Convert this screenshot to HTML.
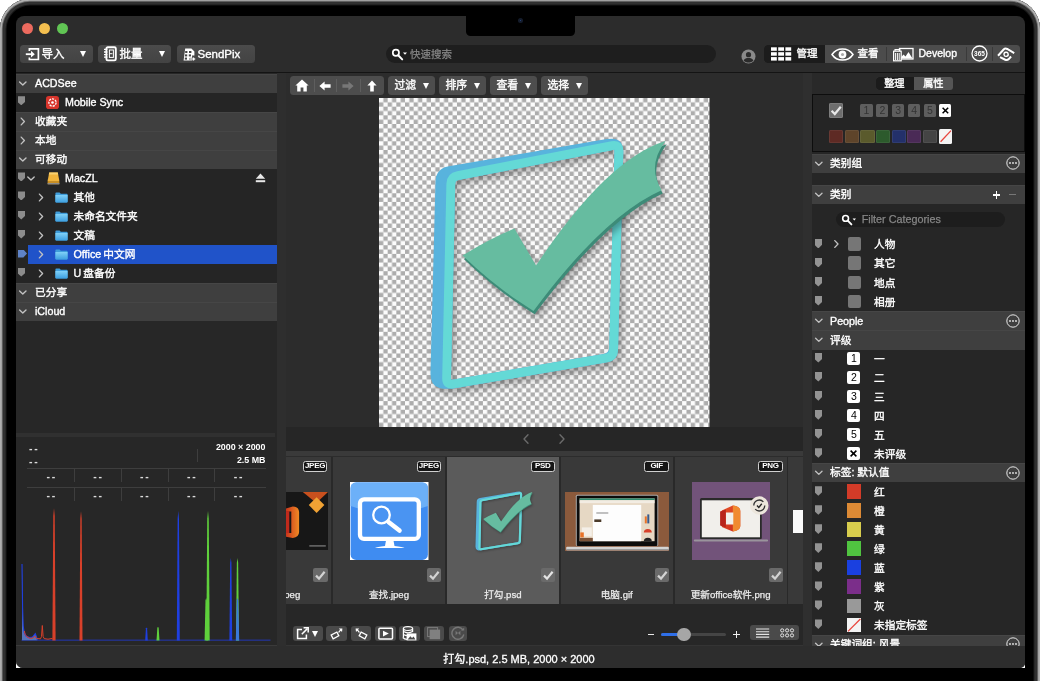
<!DOCTYPE html>
<html lang="zh"><head><meta charset="utf-8"><title>ACDSee</title>
<style>
*{box-sizing:border-box;margin:0;padding:0}
html,body{width:1040px;height:681px;overflow:hidden;background:#fff}
body{position:relative;font-family:"Liberation Sans","Noto Sans CJK SC",sans-serif;color:#fff;font-size:11px;line-height:1}
div,span,svg{position:absolute}
#bezel{left:-.2px;top:-1px;width:1040.600px;height:760px;border-radius:30px;background:#000;
 box-shadow:inset 0 0 0 1.800px #b0b0b0, inset 0 0 0 2.700px #707070, inset 0 0 0 5.600px #303030, inset 0 0 0 6.600px #181818}
#blcorner{left:16px;top:655px;width:12px;height:13px;background:#fff}
#brcorner{left:1017px;top:660px;width:8px;height:8.400px;background:#fff}
#screen{left:16px;top:16px;width:1009px;height:652px;background:#2c2c2c;border-radius:8px 8px 5px 7px;overflow:hidden}
#w{left:-16px;top:-16px;width:1040px;height:681px;will-change:transform}
#notch{left:465.800px;top:16px;width:109.400px;height:19.500px;background:#000;border-radius:0 0 4.500px 4.500px}
.tl{top:22.5px;width:11px;height:11px;border-radius:50%}
.btn{height:18px;background:linear-gradient(#4b4b4b,#434343);border-radius:3.5px}
.bt{font-size:11.5px;line-height:18px;top:0;white-space:nowrap;-webkit-text-stroke:.35px #fff}
.dd{width:0;height:0;border-left:3.900px solid transparent;border-right:3.900px solid transparent;border-top:6px solid #fff;top:6.300px;margin-left:-.4px}
.row{height:19px;white-space:nowrap}
.hdr{background:#3f3f3f;box-shadow:inset 0 1px 0 #464646}
.sub{background:#252525}
.t{top:0;font-size:10.700px;line-height:19px;white-space:nowrap;-webkit-text-stroke:.35px #fff}
.tag{width:7.5px;height:9px;background:#8c8c8c;clip-path:polygon(0 0,100% 0,100% 62%,50% 100%,0 62%)}
.cb{width:14px;height:14px;border-radius:2px;background:#6c6c6c}
</style></head>
<body>
<div id="bezel"></div><div id="blcorner"></div><div id="brcorner"></div>
<div id="screen"><div id="w">
<div id="notch"><div style="left:52.200px;top:1.800px;width:5px;height:5px;border-radius:50%;background:#141c2c"></div><div style="left:54px;top:3.600px;width:1.400px;height:1.400px;border-radius:50%;background:#2a4a8a"></div></div>
<div class="tl" style="left:22.0px;background:#ec6a5e"></div>
<div class="tl" style="left:39.0px;background:#f4bf4f"></div>
<div class="tl" style="left:56.5px;background:#61c554"></div>
<div style="left:16px;top:71.5px;width:1009px;height:1.5px;background:#141414"></div>
<div class="btn" style="left:19.5px;top:45.200px;width:73px"><svg style="left:5.5px;top:2px" width="15" height="14" viewBox="0 0 15 14"><path d="M4.400,4V1.900h9v10.600h-9v-2.100" fill="none" stroke="#fff" stroke-width="1.700"/><path d="M0.800,7.200h6.800" stroke="#fff" stroke-width="1.800"/><path d="M6,3.800L9.800,7.200L6,10.600z" fill="#fff"/></svg><span class="bt" style="left:22px">导入</span><span class="dd" style="left:61px"></span></div>
<div class="btn" style="left:97.5px;top:45.200px;width:73px"><svg style="left:6.5px;top:1px" width="13" height="16" viewBox="0 0 13 16"><rect x="2.400" y="1.200" width="9.400" height="13.200" rx="1.400" fill="none" stroke="#fff" stroke-width="1.900"/><path d="M0,3.400h3.400M0,6h3.400M0,8.600h3.400M0,11.200h3.400" stroke="#fff" stroke-width="1.300"/><rect x="5.4" y="4" width="4" height="7.4" fill="none" stroke="#fff" stroke-width="1"/><path d="M5.4,7.7h3" stroke="#fff" stroke-width="1"/></svg><span class="bt" style="left:22px">批量</span><span class="dd" style="left:61.5px"></span></div>
<div class="btn" style="left:177px;top:45.200px;width:78px"><svg style="left:6px;top:3px" width="13" height="13" viewBox="0 0 13 13"><path d="M2.2,0.4h6.2l3,3v4.2h-2.4v5H0.6z" fill="#fff"/><rect x="2.2" y="3" width="2.2" height="2" fill="#444"/><rect x="2" y="6.4" width="2.2" height="2" fill="#444"/><rect x="1.8" y="9.6" width="2.2" height="2" fill="#444"/><rect x="6" y="3" width="2.4" height="2" fill="#444"/><rect x="5.8" y="6.4" width="2.2" height="2" fill="#444"/><path d="M6.6,10.2h3v-1.8l3.2,2.6l-3.2,2.6v-1.8h-3z" fill="#fff" stroke="#444" stroke-width=".5"/></svg><span class="bt" style="left:20.5px;font-size:11.5px">SendPix</span></div>
<div style="left:385.5px;top:45px;width:330px;height:18px;border-radius:9px;background:#1e1e1e"><svg style="left:3px;top:2px" width="22" height="15" viewBox="0 0 22 15"><circle cx="6.9" cy="5.8" r="3.1" fill="none" stroke="#fff" stroke-width="1.7"/><path d="M9.2,8.2L13.2,12.4" stroke="#fff" stroke-width="2" stroke-linecap="round"/><path d="M14,5.4h4l-2,2.4z" fill="#fff"/></svg><span style="left:24.5px;top:0;line-height:18.5px;font-size:10.5px;color:#858585;-webkit-text-stroke:.25px #858585;white-space:nowrap">快速搜索</span></div>
<svg style="left:741px;top:48.5px" width="15" height="15" viewBox="0 0 15 15"><circle cx="7.5" cy="7.5" r="7" fill="#8a8a8a"/><circle cx="7.5" cy="5.7" r="2.6" fill="#2b2b2b"/><path d="M2.6,11.4c1-2,2.8-2.4,4.9-2.4s3.900,.4,4.900,2.4c-1.200,1.400-3,2.200-4.900,2.200s-3.700-.8-4.900-2.200z" fill="#2b2b2b"/></svg>
<div style="left:763.5px;top:44.5px;width:256px;height:18px;border-radius:3.5px;background:#4c4c4c;overflow:hidden"><div style="left:0;top:0;width:61.500px;height:18px;background:#1c1c1c"></div><div style="left:122px;top:2px;width:1px;height:14px;background:#3a3a3a"></div><div style="left:202px;top:2px;width:1px;height:14px;background:#3a3a3a"></div><div style="left:228.500px;top:2px;width:1px;height:14px;background:#3a3a3a"></div><svg style="left:7.5px;top:2.5px" width="21" height="14" viewBox="0 0 21 14"><rect x="0.0" y="0.3" width="5.800" height="3.500" fill="#fff"/><rect x="7.2" y="0.3" width="5.800" height="3.500" fill="#fff"/><rect x="14.4" y="0.3" width="5.800" height="3.500" fill="#fff"/><rect x="0.0" y="5.2" width="5.800" height="3.500" fill="#fff"/><rect x="7.2" y="5.2" width="5.800" height="3.500" fill="#fff"/><rect x="14.4" y="5.2" width="5.800" height="3.500" fill="#fff"/><rect x="0.0" y="10.100000000000001" width="5.800" height="3.500" fill="#fff"/><rect x="7.2" y="10.100000000000001" width="5.800" height="3.500" fill="#fff"/><rect x="14.4" y="10.100000000000001" width="5.800" height="3.500" fill="#fff"/></svg><span class="bt" style="left:33px;top:-.7px;font-size:10.5px">管理</span><svg style="left:67.500px;top:3px" width="23" height="13" viewBox="0 0 23 13"><path d="M1,6.500C4,2 8,0.900 11.500,0.900S19,2 22,6.500C19,11 15,12.100 11.500,12.100S4,11 1,6.500z" fill="none" stroke="#fff" stroke-width="1.500"/><circle cx="11.500" cy="6.500" r="3.900" fill="#fff"/><circle cx="11.500" cy="6.500" r="1.500" fill="#aaa"/></svg><span class="bt" style="left:94px;top:-.7px;font-size:10.5px">查看</span><svg style="left:129px;top:2px" width="21" height="15" viewBox="0 0 21 15"><rect x="6.500" y="1.500" width="13.500" height="10.500" fill="none" stroke="#fff" stroke-width="1.300"/><path d="M7,11.500l3.500-4l2,2l3-4.500l4,6.500z" fill="#fff"/><rect x="0.600" y="4.200" width="7.600" height="9.600" fill="#4c4c4c" stroke="#fff" stroke-width="1.200"/><path d="M2.600,6v7M4.400,6v7M6.200,6v7" stroke="#fff" stroke-width="1"/><path d="M2,4V2.600h4.800V4" fill="none" stroke="#fff" stroke-width="1.100"/></svg><span class="bt" style="left:155px;top:-.5px;font-size:10.5px">Develop</span><svg style="left:207.700px;top:.4px" width="17" height="17" viewBox="0 0 17 17"><circle cx="8.500" cy="8.500" r="7.500" fill="none" stroke="#fff" stroke-width="1.300"/><text x="8.500" y="11" font-size="6.500" font-weight="bold" fill="#fff" text-anchor="middle" font-family="Liberation Sans, sans-serif">365</text></svg><svg style="left:232.500px;top:0.800px" width="20" height="17" viewBox="0 0 20 17"><g transform="rotate(-8 10 8.500)"><path d="M1.800,9.600L8.200,4.200Q10,2.900 11.800,4.200L18.200,9.300" fill="none" stroke="#fff" stroke-width="2"/><path d="M3.600,11.200L8.400,14.600Q10.200,15.700 12,14.400L14.600,12.200" fill="none" stroke="#fff" stroke-width="2"/><circle cx="10" cy="9.300" r="2.100" fill="none" stroke="#fff" stroke-width="1.400"/></g></svg></div>
<div style="left:16px;top:73px;width:261px;height:572px;background:#272727"></div>
<div class="row hdr" style="left:16px;top:73.80px;width:261px"><svg style="left:0;top:0px" width="261" height="19" viewBox="16 0 261 19"><path d="M19.6,7.9 L22.8,11.1 L26.0,7.9" fill="none" stroke="#c2c2c2" stroke-width="1.35" stroke-linecap="round" stroke-linejoin="round"/></svg><span class="t" style="left:19px">ACDSee</span></div>
<div class="row sub" style="left:16px;top:92.83px;width:261px">
<div class="tag" style="left:1.500px;top:3.500px"></div>
<svg style="left:29.500px;top:3px" width="13" height="13" viewBox="0 0 13 13"><rect x="0" y="0" width="13" height="13" rx="2.800" fill="#d8352c"/><circle cx="6.500" cy="6.500" r="3.600" fill="none" stroke="#fff" stroke-width="1.300" stroke-dasharray="2.200 1"/><circle cx="6.500" cy="6.500" r="1.300" fill="#fff"/></svg>
<span class="t" style="left:49px">Mobile Sync</span>
</div>
<div class="row hdr" style="left:16px;top:111.86px;width:261px"><svg style="left:0;top:0px" width="261" height="19" viewBox="16 0 261 19"><path d="M21.2,6.1 L24.400000000000002,9.5 L21.2,12.9" fill="none" stroke="#c2c2c2" stroke-width="1.35" stroke-linecap="round" stroke-linejoin="round"/></svg><span class="t" style="left:19px">收藏夹</span></div>
<div class="row hdr" style="left:16px;top:130.89px;width:261px"><svg style="left:0;top:0px" width="261" height="19" viewBox="16 0 261 19"><path d="M21.2,6.1 L24.400000000000002,9.5 L21.2,12.9" fill="none" stroke="#c2c2c2" stroke-width="1.35" stroke-linecap="round" stroke-linejoin="round"/></svg><span class="t" style="left:19px">本地</span></div>
<div class="row hdr" style="left:16px;top:149.92px;width:261px"><svg style="left:0;top:0px" width="261" height="19" viewBox="16 0 261 19"><path d="M19.6,7.9 L22.8,11.1 L26.0,7.9" fill="none" stroke="#c2c2c2" stroke-width="1.35" stroke-linecap="round" stroke-linejoin="round"/></svg><span class="t" style="left:19px">可移动</span></div>
<div class="row sub" style="left:16px;top:168.95px;width:261px">
<div class="tag" style="left:1.500px;top:3.500px"></div>
<svg style="left:0;top:0px" width="261" height="19" viewBox="16 0 261 19"><path d="M27.8,7.9 L31,11.1 L34.2,7.9" fill="none" stroke="#c2c2c2" stroke-width="1.35" stroke-linecap="round" stroke-linejoin="round"/></svg>
<svg style="left:30.500px;top:3px" width="13" height="13" viewBox="0 0 13 13"><path d="M2.200,0.600H10.800L12.400,9H0.600z" fill="#f0b43c"/><path d="M2.200,0.600H10.800L11.200,2.600H1.800z" fill="#f7d070"/><rect x="0.600" y="9" width="11.800" height="3.200" rx="0.600" fill="#c98f24"/><rect x="0.600" y="11" width="11.800" height="1.400" fill="#8a8a8a"/></svg>
<span class="t" style="left:49px">MacZL</span>
<svg style="left:239px;top:4.500px" width="11" height="10" viewBox="0 0 11 10"><path d="M5.500,0.500L10.200,5.800H0.800z" fill="#e8e8e8"/><rect x="0.800" y="7.200" width="9.400" height="2" fill="#e8e8e8"/></svg>
</div>
<div class="row sub" style="left:16px;top:187.98px;width:261px">
<div class="tag" style="left:1.500px;top:3.500px"></div>
<svg style="left:0;top:0px" width="261" height="19" viewBox="16 0 261 19"><path d="M39.4,6.1 L42.6,9.5 L39.4,12.9" fill="none" stroke="#c2c2c2" stroke-width="1.35" stroke-linecap="round" stroke-linejoin="round"/></svg>
<svg style="left:39px;top:4px" width="13" height="11" viewBox="0 0 13 11"><defs><linearGradient id="fg6" x1="0" y1="0" x2="0" y2="1"><stop offset="0" stop-color="#7fd0f7"/><stop offset="1" stop-color="#3d9fe0"/></linearGradient></defs><path d="M0.400,1.400Q0.400,0.500 1.300,0.500H4.600L5.800,1.700H11.700Q12.600,1.700 12.600,2.600V9.600Q12.600,10.500 11.700,10.500H1.300Q0.400,10.500 0.400,9.600z" fill="#3f9ddb"/><path d="M0.400,3.100H12.600V9.600Q12.600,10.500 11.700,10.500H1.300Q0.400,10.500 0.400,9.600z" fill="url(#fg6)"/></svg>
<span class="t" style="left:57.500px">其他</span>
</div>
<div class="row sub" style="left:16px;top:207.01px;width:261px">
<div class="tag" style="left:1.500px;top:3.500px"></div>
<svg style="left:0;top:0px" width="261" height="19" viewBox="16 0 261 19"><path d="M39.4,6.1 L42.6,9.5 L39.4,12.9" fill="none" stroke="#c2c2c2" stroke-width="1.35" stroke-linecap="round" stroke-linejoin="round"/></svg>
<svg style="left:39px;top:4px" width="13" height="11" viewBox="0 0 13 11"><defs><linearGradient id="fg7" x1="0" y1="0" x2="0" y2="1"><stop offset="0" stop-color="#7fd0f7"/><stop offset="1" stop-color="#3d9fe0"/></linearGradient></defs><path d="M0.400,1.400Q0.400,0.500 1.300,0.500H4.600L5.800,1.700H11.700Q12.600,1.700 12.600,2.600V9.600Q12.600,10.500 11.700,10.500H1.300Q0.400,10.500 0.400,9.600z" fill="#3f9ddb"/><path d="M0.400,3.100H12.600V9.600Q12.600,10.500 11.700,10.500H1.300Q0.400,10.500 0.400,9.600z" fill="url(#fg7)"/></svg>
<span class="t" style="left:57.500px">未命名文件夹</span>
</div>
<div class="row sub" style="left:16px;top:226.04px;width:261px">
<div class="tag" style="left:1.500px;top:3.500px"></div>
<svg style="left:0;top:0px" width="261" height="19" viewBox="16 0 261 19"><path d="M39.4,6.1 L42.6,9.5 L39.4,12.9" fill="none" stroke="#c2c2c2" stroke-width="1.35" stroke-linecap="round" stroke-linejoin="round"/></svg>
<svg style="left:39px;top:4px" width="13" height="11" viewBox="0 0 13 11"><defs><linearGradient id="fg8" x1="0" y1="0" x2="0" y2="1"><stop offset="0" stop-color="#7fd0f7"/><stop offset="1" stop-color="#3d9fe0"/></linearGradient></defs><path d="M0.400,1.400Q0.400,0.500 1.300,0.500H4.600L5.800,1.700H11.700Q12.600,1.700 12.600,2.600V9.600Q12.600,10.500 11.700,10.500H1.300Q0.400,10.500 0.400,9.600z" fill="#3f9ddb"/><path d="M0.400,3.100H12.600V9.600Q12.600,10.500 11.700,10.500H1.300Q0.400,10.500 0.400,9.600z" fill="url(#fg8)"/></svg>
<span class="t" style="left:57.500px">文稿</span>
</div>
<div class="row sub" style="left:16px;top:245.07px;width:261px">
<div style="left:11.700px;top:0;width:249.300px;height:19.200px;background:#2053c9"></div>
<div style="left:1.500px;top:4.500px;width:9.500px;height:8px;background:#5e83c8;clip-path:polygon(0 0,62% 0,100% 50%,62% 100%,0 100%)"></div>
<svg style="left:0;top:0px" width="261" height="19" viewBox="16 0 261 19"><path d="M39.4,6.1 L42.6,9.5 L39.4,12.9" fill="none" stroke="#c2c2c2" stroke-width="1.35" stroke-linecap="round" stroke-linejoin="round"/></svg>
<svg style="left:39px;top:4px" width="13" height="11" viewBox="0 0 13 11"><defs><linearGradient id="fg9" x1="0" y1="0" x2="0" y2="1"><stop offset="0" stop-color="#7fd0f7"/><stop offset="1" stop-color="#3d9fe0"/></linearGradient></defs><path d="M0.400,1.400Q0.400,0.500 1.300,0.500H4.600L5.800,1.700H11.700Q12.600,1.700 12.600,2.600V9.600Q12.600,10.500 11.700,10.500H1.300Q0.400,10.500 0.400,9.600z" fill="#3f9ddb"/><path d="M0.400,3.100H12.600V9.600Q12.600,10.500 11.700,10.500H1.300Q0.400,10.500 0.400,9.600z" fill="url(#fg9)"/></svg>
<span class="t" style="left:57.500px">Office&#8201;中文网</span>
</div>
<div class="row sub" style="left:16px;top:264.10px;width:261px">
<div class="tag" style="left:1.500px;top:3.500px"></div>
<svg style="left:0;top:0px" width="261" height="19" viewBox="16 0 261 19"><path d="M39.4,6.1 L42.6,9.5 L39.4,12.9" fill="none" stroke="#c2c2c2" stroke-width="1.35" stroke-linecap="round" stroke-linejoin="round"/></svg>
<svg style="left:39px;top:4px" width="13" height="11" viewBox="0 0 13 11"><defs><linearGradient id="fg10" x1="0" y1="0" x2="0" y2="1"><stop offset="0" stop-color="#7fd0f7"/><stop offset="1" stop-color="#3d9fe0"/></linearGradient></defs><path d="M0.400,1.400Q0.400,0.500 1.300,0.500H4.600L5.800,1.700H11.700Q12.600,1.700 12.600,2.600V9.600Q12.600,10.500 11.700,10.500H1.300Q0.400,10.500 0.400,9.600z" fill="#3f9ddb"/><path d="M0.400,3.100H12.600V9.600Q12.600,10.500 11.700,10.500H1.300Q0.400,10.500 0.400,9.600z" fill="url(#fg10)"/></svg>
<span class="t" style="left:57.500px">U&#8201;盘备份</span>
</div>
<div class="row hdr" style="left:16px;top:283.13px;width:261px"><svg style="left:0;top:0px" width="261" height="19" viewBox="16 0 261 19"><path d="M19.6,7.9 L22.8,11.1 L26.0,7.9" fill="none" stroke="#c2c2c2" stroke-width="1.35" stroke-linecap="round" stroke-linejoin="round"/></svg><span class="t" style="left:19px">已分享</span></div>
<div class="row hdr" style="left:16px;top:302.16px;width:261px"><svg style="left:0;top:0px" width="261" height="19" viewBox="16 0 261 19"><path d="M19.6,7.9 L22.8,11.1 L26.0,7.9" fill="none" stroke="#c2c2c2" stroke-width="1.35" stroke-linecap="round" stroke-linejoin="round"/></svg><span class="t" style="left:19px">iCloud</span></div>
<div style="left:16px;top:432.500px;width:258.500px;height:4.500px;background:#303030"></div>
<span style="left:28.9px;top:443.5px;font-size:10.500px;line-height:8px;font-weight:bold;letter-spacing:1.800px;color:#dcdcdc">--</span><span style="left:28.9px;top:456.5px;font-size:10.500px;line-height:8px;font-weight:bold;letter-spacing:1.800px;color:#dcdcdc">--</span>
<span style="left:150px;top:442px;width:115.500px;text-align:right;font-size:8.900px;line-height:10px;font-weight:bold;white-space:nowrap">2000 × 2000</span>
<span style="left:150px;top:455px;width:115.500px;text-align:right;font-size:8.900px;line-height:10px;font-weight:bold;white-space:nowrap">2.5 MB</span>
<div style="left:197px;top:449px;width:1px;height:12.500px;background:#3e3e3e"></div>
<div style="left:27px;top:468px;width:238.500px;height:1px;background:#3e3e3e"></div>
<div style="left:73.9px;top:468px;width:1px;height:13.500px;background:#3e3e3e"></div>
<div style="left:120.7px;top:468px;width:1px;height:13.500px;background:#3e3e3e"></div>
<div style="left:167.5px;top:468px;width:1px;height:13.500px;background:#3e3e3e"></div>
<div style="left:214.2px;top:468px;width:1px;height:13.500px;background:#3e3e3e"></div>
<span style="left:46.4px;top:472.4px;font-size:10.500px;line-height:8px;font-weight:bold;letter-spacing:1.800px;color:#dcdcdc">--</span>
<span style="left:93.2px;top:472.4px;font-size:10.500px;line-height:8px;font-weight:bold;letter-spacing:1.800px;color:#dcdcdc">--</span>
<span style="left:140.0px;top:472.4px;font-size:10.500px;line-height:8px;font-weight:bold;letter-spacing:1.800px;color:#dcdcdc">--</span>
<span style="left:187.0px;top:472.4px;font-size:10.500px;line-height:8px;font-weight:bold;letter-spacing:1.800px;color:#dcdcdc">--</span>
<span style="left:233.7px;top:472.4px;font-size:10.500px;line-height:8px;font-weight:bold;letter-spacing:1.800px;color:#dcdcdc">--</span>
<div style="left:27px;top:487px;width:238.500px;height:1px;background:#3e3e3e"></div>
<div style="left:73.9px;top:487px;width:1px;height:13.500px;background:#3e3e3e"></div>
<div style="left:120.7px;top:487px;width:1px;height:13.500px;background:#3e3e3e"></div>
<div style="left:167.5px;top:487px;width:1px;height:13.500px;background:#3e3e3e"></div>
<div style="left:214.2px;top:487px;width:1px;height:13.500px;background:#3e3e3e"></div>
<span style="left:46.4px;top:491.4px;font-size:10.500px;line-height:8px;font-weight:bold;letter-spacing:1.800px;color:#dcdcdc">--</span>
<span style="left:93.2px;top:491.4px;font-size:10.500px;line-height:8px;font-weight:bold;letter-spacing:1.800px;color:#dcdcdc">--</span>
<span style="left:140.0px;top:491.4px;font-size:10.500px;line-height:8px;font-weight:bold;letter-spacing:1.800px;color:#dcdcdc">--</span>
<span style="left:187.0px;top:491.4px;font-size:10.500px;line-height:8px;font-weight:bold;letter-spacing:1.800px;color:#dcdcdc">--</span>
<span style="left:233.7px;top:491.4px;font-size:10.500px;line-height:8px;font-weight:bold;letter-spacing:1.800px;color:#dcdcdc">--</span>
<svg style="left:16px;top:500px" width="261" height="145" viewBox="16 500 261 145"><rect x="21.500" y="639.600" width="249" height="1.100" fill="#2336a8"/><path d="M22,564 L22.600,608 L23.200,626 L24.200,632.500 L26,636 L29.500,637.600 L32.500,637 L34.300,634.800 L35.300,633.600 L36.300,636.500 L37.400,640.300 L22,640.300z" fill="#5674b8"/><path d="M22,564 L22.600,608 L23.200,626 L24.200,632.500 L26,636 L29.500,637.600 L32.500,637 L34.300,634.800 L35.300,633.600 L36.300,636.500 L37.400,640" fill="none" stroke="#1f3fe0" stroke-width="1.100"/><path d="M24.300,631 L25.200,634.500 L27,637 L30,638.400 L33,638 L35,636.200 L36.500,638.500 L40.500,638.800 L41.500,636.500 L42.300,625.500 L43.100,636.500 L44.200,638.600 L48,639.200 L52.500,638.400" fill="none" stroke="#d8402a" stroke-width="1"/><path d="M52.4,640.5 L53.28,515.95 L54,508 L54.72,515.95 L55.6,640.5z" fill="#d8402a" fill-opacity="1"/><path d="M79.5,640.5 L80.325,518.77 L81,511 L81.675,518.77 L82.5,640.5z" fill="#d8402a" fill-opacity="1"/><path d="M145.2,640.5 L145.915,628.28 L146.5,627.5 L147.085,628.28 L147.8,640.5z" fill="#1f3fe0" fill-opacity="1"/><path d="M156.5,640.5 L157.325,627.81 L158,627 L158.675,627.81 L159.5,640.5z" fill="#5fd03c" fill-opacity="1"/><path d="M176.8,640.5 L177.625,518.77 L178.3,511 L178.97500000000002,518.77 L179.8,640.5z" fill="#1f3fe0" fill-opacity="1"/><path d="M204.6,640.5 L205.48,600.55 L206.2,598 L206.92,600.55 L207.79999999999998,640.5z" fill="#5fd03c" fill-opacity="1"/><path d="M206.3,640.5 L207.235,518.77 L208,511 L208.765,518.77 L209.7,640.5z" fill="#5fd03c" fill-opacity="1"/><path d="M229.4,640.5 L230.17000000000002,562.95 L230.8,558 L231.43,562.95 L232.20000000000002,640.5z" fill="#1f3fe0" fill-opacity="1"/><path d="M236.0,640.5 L236.825,562.95 L237.5,558 L238.175,562.95 L239.0,640.5z" fill="#5fd03c" fill-opacity="1"/><path d="M235.8,640.5 L236.735,600.55 L237.5,598 L238.265,600.55 L239.2,640.5z" fill="#3a78d8" fill-opacity="1"/></svg>
<div style="left:16px;top:644.500px;width:261px;height:1px;background:#3a3a3a"></div>
<div style="left:277px;top:73px;width:9.300px;height:572.500px;background:#2e2e2e"></div>
<div style="left:286.300px;top:73px;width:516.400px;height:572.500px;background:#2c2c2c"></div>
<div class="btn" style="left:289.500px;top:76.300px;width:94.500px;height:19.200px;background:#4d4d4d"><div style="left:24px;top:3px;width:1px;height:13px;background:#5e5e5e"></div><div style="left:46.800px;top:3px;width:1px;height:13px;background:#5e5e5e"></div><div style="left:70px;top:3px;width:1px;height:13px;background:#5e5e5e"></div><svg style="left:5px;top:3px" width="14" height="13" viewBox="0 0 14 13"><path d="M7,0.600L13.600,6.600H11.800V12.400H8.400V8.400H5.600V12.400H2.200V6.600H0.400z" fill="#fff"/></svg><svg style="left:29.500px;top:4.500px" width="12" height="10" viewBox="0 0 12 10"><path d="M0.400,5L5.600,0.400V3.200H11.600V6.800H5.600V9.600z" fill="#fff"/></svg><svg style="left:52.500px;top:4.500px" width="12" height="10" viewBox="0 0 12 10"><path d="M11.600,5L6.400,0.400V3.200H0.400V6.800H6.400V9.600z" fill="#777"/></svg><svg style="left:77px;top:3.500px" width="10" height="12" viewBox="0 0 10 12"><path d="M5,0.400L9.600,5.600H6.800V11.600H3.200V5.600H0.400z" fill="#fff"/></svg></div>
<div class="btn" style="left:388px;top:76.300px;width:47px;height:19.200px;background:#4d4d4d"><span class="bt" style="left:6.500px;line-height:19px;font-size:10.800px">过滤</span><span class="dd" style="left:35.300px;top:7px"></span></div>
<div class="btn" style="left:439px;top:76.300px;width:47px;height:19.200px;background:#4d4d4d"><span class="bt" style="left:6.500px;line-height:19px;font-size:10.800px">排序</span><span class="dd" style="left:35.300px;top:7px"></span></div>
<div class="btn" style="left:490px;top:76.300px;width:47px;height:19.200px;background:#4d4d4d"><span class="bt" style="left:6.500px;line-height:19px;font-size:10.800px">查看</span><span class="dd" style="left:35.300px;top:7px"></span></div>
<div class="btn" style="left:541px;top:76.300px;width:47px;height:19.200px;background:#4d4d4d"><span class="bt" style="left:6.500px;line-height:19px;font-size:10.800px">选择</span><span class="dd" style="left:35.300px;top:7px"></span></div>
<svg style="left:379px;top:98px" width="330.500" height="329" viewBox="0 0 330.500 329"><defs><pattern id="ckp" width="8.660" height="8.660" patternUnits="userSpaceOnUse"><rect width="8.660" height="8.660" fill="#fcfcfc"/><rect x="4.330" width="4.330" height="4.330" fill="#adadad"/><rect y="4.330" width="4.330" height="4.330" fill="#adadad"/></pattern></defs><rect width="330.500" height="329" fill="url(#ckp)"/></svg>
<svg style="left:378.5px;top:98px" width="331" height="329" viewBox="0 0 331 329" preserveAspectRatio="none"><g filter="drop-shadow(3px 4px 3.5px rgba(0,0,0,.32))"><path d="M60.9,83.8 Q61.2,74.3 70.6,72.7 L222.7,46.3 Q232.1,44.7 236.1,45.5 L236.1,45.5 Q240.1,46.3 239.8,55.8 L234.7,249.3 Q234.4,258.8 225.0,260.4 L76.8,285.6 Q67.4,287.2 61.5,285.7 L61.5,285.7 Q55.6,284.2 55.9,274.7 z M71.8,85.9 Q72.0,78.9 78.9,77.6 L233.2,47.6 Q240.1,46.3 239.9,53.3 L234.6,251.8 Q234.4,258.8 227.5,260.0 L74.3,286.0 Q67.4,287.2 67.6,280.2 z" fill="#58b3dd" fill-rule="evenodd" stroke="#58b3dd" stroke-width="8.800" stroke-linejoin="round"/><path d="M71.8,85.9 Q72.0,78.9 78.9,77.6 L233.2,47.6 Q240.1,46.3 239.9,53.3 L234.6,251.8 Q234.4,258.8 227.5,260.0 L74.3,286.0 Q67.4,287.2 67.6,280.2 z" fill="none" stroke="#64d9d6" stroke-width="8.800" stroke-linejoin="round"/></g><g filter="drop-shadow(3px 4px 3.5px rgba(0,0,0,.32))"><path d="M83.600,157.600 Q110,141 135.400,130.500 L157,167.500 Q228,61 286.500,43 Q267.500,68 282.600,92.200 Q225.400,117.500 154.500,213 Q117,190 83.600,157.600z" transform="translate(1.200,3.300)" fill="#3d8b78"/><path d="M83.600,157.600 Q110,141 135.400,130.500 L157,167.500 Q228,61 286.500,43 Q267.500,68 282.600,92.200 Q225.400,117.500 154.500,213 Q117,190 83.600,157.600z" fill="#66bca0"/></g></svg>
<div style="left:286.300px;top:427px;width:516.400px;height:24.300px;background:#262626"></div>
<svg style="left:516px;top:432px" width="60" height="14" viewBox="516 432 60 14"><path d="M528.0,434.75 L524.0,439 L528.0,443.25" fill="none" stroke="#6c6c6c" stroke-width="1.35" stroke-linecap="round" stroke-linejoin="round"/><path d="M560.0,434.75 L564.0,439 L560.0,443.25" fill="none" stroke="#6c6c6c" stroke-width="1.35" stroke-linecap="round" stroke-linejoin="round"/></svg>
<div style="left:286.300px;top:451.300px;width:516.400px;height:5.200px;background:#3a3a3a"></div>
<div style="left:286.300px;top:456.500px;width:516.400px;height:147.300px;background:#292929;overflow:hidden">
<div style="left:-67.17px;top:0;width:112.100px;height:147.300px;background:#393939">
<div style="left:83.700px;top:4.700px;width:24.500px;height:10.600px;border:1px solid #d0d0d0;border-radius:2.500px;background:#161616"><span style="left:0;top:0;width:22.500px;text-align:center;font-size:8px;line-height:8.800px;font-weight:bold;letter-spacing:-.25px">JPEG</span></div>
<div class="cb" style="left:94px;top:111.3px;width:14.500px;height:14.500px;background:#6a6a6a"><svg style="left:0;top:0" width="14.500" height="14.500" viewBox="0 0 14.500 14.500"><path d="M3,7.600L6,10.600L11.600,3.800" fill="none" stroke="#d4d4d4" stroke-width="2.200"/></svg></div>
<span style="right:31px;top:131.500px;font-size:9.600px;line-height:13px;white-space:nowrap;color:#ececec;-webkit-text-stroke:.25px #ececec">更新office365.jpeg</span>
<svg style="left:5.07px;top:35.40px" width="104" height="58.200" viewBox="224.200 491.900 104 58.200"><defs><linearGradient id="og1" x1="0" y1="0" x2="1" y2="0"><stop offset="0" stop-color="#c8341c"/><stop offset="1" stop-color="#f08a24"/></linearGradient></defs><rect x="224.200" y="491.900" width="104" height="58.200" fill="#171717"/><path d="M303,491.900H328.200L316.500,503z" fill="#c8501e"/><path d="M316.800,497.200L324.600,505L316.800,512.800L309,505z" fill="#f0a234"/><path d="M286,508.500L293,506.500Q299.300,507 299.300,512V532Q299.300,537 293,538L286,536.500V533H291.500V511.500H286z" fill="url(#og1)"/><rect x="286" y="511" width="3.500" height="22" fill="#c02a1c"/><rect x="309.500" y="545" width="16.500" height="1.600" fill="#666"/></svg>
</div>
<div style="left:46.70px;top:0;width:112.100px;height:147.300px;background:#393939">
<div style="left:83.700px;top:4.700px;width:24.500px;height:10.600px;border:1px solid #d0d0d0;border-radius:2.500px;background:#161616"><span style="left:0;top:0;width:22.500px;text-align:center;font-size:8px;line-height:8.800px;font-weight:bold;letter-spacing:-.25px">JPEG</span></div>
<div class="cb" style="left:94px;top:111.3px;width:14.500px;height:14.500px;background:#6a6a6a"><svg style="left:0;top:0" width="14.500" height="14.500" viewBox="0 0 14.500 14.500"><path d="M3,7.600L6,10.600L11.600,3.800" fill="none" stroke="#d4d4d4" stroke-width="2.200"/></svg></div>
<span style="left:0;top:131.500px;width:112.100px;text-align:center;font-size:9.600px;line-height:13px;white-space:nowrap;color:#ececec;-webkit-text-stroke:.25px #ececec">查找.jpeg</span>
<svg style="left:17.30px;top:25.10px" width="78.500" height="78.500" viewBox="0 0 78.500 78.500"><rect width="78.500" height="78.500" fill="#fff"/><rect x="0.600" y="0.600" width="77.300" height="77.300" rx="5.500" fill="#3f8cf1"/><path d="M0.600,6.500Q0.600,0.600 6.500,0.600H72Q77.900,0.600 77.900,6.500V24Q60,30.500 39.200,30.500T0.600,24z" fill="#6cb0f8"/><rect x="10" y="17.300" width="58.800" height="39.600" rx="4" fill="#4a94f2" stroke="#fff" stroke-width="4.300"/><path d="M36,58.500H43.500L44.500,64Q53,64.800 54.500,66H25Q26.500,64.800 35,64z" fill="#fff"/><circle cx="31.500" cy="33" r="8.300" fill="none" stroke="#fff" stroke-width="2.300"/><path d="M38.500,40L49.500,48.500" stroke="#fff" stroke-width="4.600" stroke-linecap="round"/></svg>
</div>
<div style="left:160.57px;top:0;width:112.100px;height:147.300px;background:#5b5b5b">
<div style="left:83.700px;top:4.700px;width:24.500px;height:10.600px;border:1px solid #d0d0d0;border-radius:2.500px;background:#161616"><span style="left:0;top:0;width:22.500px;text-align:center;font-size:8px;line-height:8.800px;font-weight:bold;letter-spacing:-.25px">PSD</span></div>
<div class="cb" style="left:94px;top:111.3px;width:14.500px;height:14.500px;background:#6a6a6a"><svg style="left:0;top:0" width="14.500" height="14.500" viewBox="0 0 14.500 14.500"><path d="M3,7.600L6,10.600L11.600,3.800" fill="none" stroke="#e4e4e4" stroke-width="2.200"/></svg></div>
<span style="left:0;top:131.500px;width:112.100px;text-align:center;font-size:9.600px;line-height:13px;white-space:nowrap;color:#ececec;-webkit-text-stroke:.25px #ececec">打勾.psd</span>
<svg style="left:15.73px;top:25.6px" width="80.2" height="77.38" viewBox="0 0 331 329" preserveAspectRatio="none"><g filter="drop-shadow(3px 4px 3.5px rgba(0,0,0,.32))"><path d="M60.9,83.8 Q61.2,74.3 70.6,72.7 L222.7,46.3 Q232.1,44.7 236.1,45.5 L236.1,45.5 Q240.1,46.3 239.8,55.8 L234.7,249.3 Q234.4,258.8 225.0,260.4 L76.8,285.6 Q67.4,287.2 61.5,285.7 L61.5,285.7 Q55.6,284.2 55.9,274.7 z M71.8,85.9 Q72.0,78.9 78.9,77.6 L233.2,47.6 Q240.1,46.3 239.9,53.3 L234.6,251.8 Q234.4,258.8 227.5,260.0 L74.3,286.0 Q67.4,287.2 67.6,280.2 z" fill="#58b3dd" fill-rule="evenodd" stroke="#58b3dd" stroke-width="8.800" stroke-linejoin="round"/><path d="M71.8,85.9 Q72.0,78.9 78.9,77.6 L233.2,47.6 Q240.1,46.3 239.9,53.3 L234.6,251.8 Q234.4,258.8 227.5,260.0 L74.3,286.0 Q67.4,287.2 67.6,280.2 z" fill="none" stroke="#64d9d6" stroke-width="8.800" stroke-linejoin="round"/></g><g filter="drop-shadow(3px 4px 3.5px rgba(0,0,0,.32))"><path d="M83.600,157.600 Q110,141 135.400,130.500 L157,167.500 Q228,61 286.500,43 Q267.500,68 282.600,92.200 Q225.400,117.500 154.500,213 Q117,190 83.600,157.600z" transform="translate(1.200,3.300)" fill="#3d8b78"/><path d="M83.600,157.600 Q110,141 135.400,130.500 L157,167.500 Q228,61 286.500,43 Q267.500,68 282.600,92.200 Q225.400,117.500 154.500,213 Q117,190 83.600,157.600z" fill="#66bca0"/></g></svg>
</div>
<div style="left:274.44px;top:0;width:112.100px;height:147.300px;background:#393939">
<div style="left:83.700px;top:4.700px;width:24.500px;height:10.600px;border:1px solid #d0d0d0;border-radius:2.500px;background:#161616"><span style="left:0;top:0;width:22.500px;text-align:center;font-size:8px;line-height:8.800px;font-weight:bold;letter-spacing:-.25px">GIF</span></div>
<div class="cb" style="left:94px;top:111.3px;width:14.500px;height:14.500px;background:#6a6a6a"><svg style="left:0;top:0" width="14.500" height="14.500" viewBox="0 0 14.500 14.500"><path d="M3,7.600L6,10.600L11.600,3.800" fill="none" stroke="#d4d4d4" stroke-width="2.200"/></svg></div>
<span style="left:0;top:131.500px;width:112.100px;text-align:center;font-size:9.600px;line-height:13px;white-space:nowrap;color:#ececec;-webkit-text-stroke:.25px #ececec">电脑.gif</span>
<svg style="left:4.46px;top:35.10px" width="104.300" height="59.100" viewBox="565.200 491.600 104.300 59.100"><rect x="565.200" y="491.600" width="104.300" height="59.100" fill="#8b5a3c"/><rect x="576" y="494.300" width="82.500" height="51.400" rx="1.500" fill="#a8a8a8"/><rect x="577" y="495.300" width="80.500" height="50.200" rx="1" fill="#0c0c0c"/><rect x="579.800" y="498" width="75" height="42.800" fill="#e6d8c4"/><rect x="579.800" y="498" width="75" height="1.800" fill="#2e8b6e"/><rect x="579.800" y="499.800" width="75" height="3" fill="#f2ece2"/><rect x="593" y="504.500" width="48.400" height="36.300" fill="#fdfdfd"/><rect x="594.500" y="519" width="7" height="2.600" fill="#4a3a2a"/><rect x="596.500" y="512" width="12" height="1.200" fill="#999"/><rect x="582" y="527" width="10" height="9" fill="#f4efe8"/><rect x="580.500" y="532" width="3.500" height="5" fill="#e8732a"/><rect x="645" y="516" width="2" height="7" fill="#e8732a"/><rect x="647.500" y="514" width="2" height="9" fill="#3a5a8a"/><path d="M644,532a4,3.500 0 0 1 8,0z" fill="#d8402a"/><path d="M644,540.800a4,3.500 0 0 1 8,0z" fill="#222"/><rect x="579.800" y="537.500" width="13.200" height="3.300" fill="#7a5238"/><rect x="566.400" y="546.300" width="102.600" height="3.600" rx="1" fill="#d4d4d4"/><rect x="566.400" y="548.600" width="102.600" height="1.300" fill="#9a9a9a"/></svg>
</div>
<div style="left:388.31px;top:0;width:112.100px;height:147.300px;background:#393939">
<div style="left:83.700px;top:4.700px;width:24.500px;height:10.600px;border:1px solid #d0d0d0;border-radius:2.500px;background:#161616"><span style="left:0;top:0;width:22.500px;text-align:center;font-size:8px;line-height:8.800px;font-weight:bold;letter-spacing:-.25px">PNG</span></div>
<div class="cb" style="left:94px;top:111.3px;width:14.500px;height:14.500px;background:#6a6a6a"><svg style="left:0;top:0" width="14.500" height="14.500" viewBox="0 0 14.500 14.500"><path d="M3,7.600L6,10.600L11.600,3.800" fill="none" stroke="#d4d4d4" stroke-width="2.200"/></svg></div>
<span style="left:0;top:131.500px;width:112.100px;text-align:center;font-size:9.600px;line-height:13px;white-space:nowrap;color:#ececec;-webkit-text-stroke:.25px #ececec">更新office软件.png</span>
<svg style="left:17.59px;top:25.50px" width="78.200" height="78.200" viewBox="692.200 482 78.200 78.200"><defs><linearGradient id="og5" x1="0" y1="0" x2="1" y2="1"><stop offset="0" stop-color="#e8542a"/><stop offset="1" stop-color="#c8281c"/></linearGradient></defs><rect x="692.200" y="482" width="78.200" height="78.200" fill="#72537a"/><rect x="700.200" y="498" width="61.800" height="41.300" rx="1.500" fill="#2a2a2a"/><rect x="702" y="500.300" width="58.200" height="37" fill="#f1efeb"/><rect x="694" y="539.500" width="74.300" height="2" rx="1" fill="#9a949c"/><path d="M722,510.500L733,505.500Q740.500,506.500 740.500,511V526Q740.500,530.500 733,531.500L722,527z" fill="url(#og5)"/><path d="M733,505.500Q740.500,506.500 740.500,511V526Q740.500,530.500 733,531.500z" fill="#f08a30"/><rect x="726" y="512.500" width="7.500" height="12" fill="#f1efeb"/><path d="M720.300,511.500L726,509.500V527.500L720.300,525.500z" fill="#b8241c"/><circle cx="759.500" cy="505.500" r="9.200" fill="#ece6dc"/><path d="M754,505.500a5.500,5.500 0 0 1 9.600,-3.600M765,505.500a5.500,5.500 0 0 1 -9.600,3.600" fill="none" stroke="#333" stroke-width="1.300"/><path d="M757.200,505.600L759,507.400L762,503.800" fill="none" stroke="#222" stroke-width="1.400"/></svg>
</div>
<div style="left:502.18px;top:0;width:112.100px;height:147.300px;background:#393939">
<div style="left:4.12px;top:53.20px;width:20px;height:23.300px;background:#fbfbfb"></div>
</div>
</div>
<div style="left:286.300px;top:603.800px;width:516.400px;height:41.700px;background:#272727"></div>
<div style="left:293.1px;top:625.600px;width:29.6px;height:15.700px;border-radius:3px;background:#4a4a4a"><svg style="left:2.500px;top:1.500px" width="14" height="13" viewBox="0 0 14 13"><path d="M6,2.600H1.600V11.400H10.400V7.400" fill="none" stroke="#fff" stroke-width="1.500"/><path d="M5.800,7.200L11.400,1.600" stroke="#fff" stroke-width="1.500"/><path d="M7.600,0.800H12.200V5.400" fill="none" stroke="#fff" stroke-width="1.500"/></svg><span class="dd" style="left:19px;top:5.500px"></span></div>
<div style="left:326px;top:625.600px;width:20.8px;height:15.700px;border-radius:3px;background:#4a4a4a"><svg style="left:2.500px;top:1.500px" width="16" height="13" viewBox="0 0 16 13"><rect x="-3.200" y="-2.100" width="6.400" height="4.200" transform="translate(6,8.400) rotate(-28)" fill="none" stroke="#fff" stroke-width="1.300"/><path d="M9.600,5.600Q10.500,3.600 12.500,2.600" fill="none" stroke="#fff" stroke-width="1.300"/><path d="M9.800,1.600L13.400,1.600L13,5z" fill="#fff"/></svg></div>
<div style="left:350.5px;top:625.600px;width:20.6px;height:15.700px;border-radius:3px;background:#4a4a4a"><svg style="left:2.500px;top:1.500px" width="16" height="13" viewBox="0 0 16 13"><rect x="-3.200" y="-2.100" width="6.400" height="4.200" transform="translate(10,8.400) rotate(28)" fill="none" stroke="#fff" stroke-width="1.300"/><path d="M6.400,5.600Q5.500,3.600 3.500,2.600" fill="none" stroke="#fff" stroke-width="1.300"/><path d="M6.200,1.600L2.600,1.600L3,5z" fill="#fff"/></svg></div>
<div style="left:374.8px;top:625.600px;width:21px;height:15.700px;border-radius:3px;background:#4a4a4a"><svg style="left:2.800px;top:1px" width="16" height="14" viewBox="0 0 16 14"><rect x="0.900" y="1.200" width="13.600" height="10.800" rx="1" fill="none" stroke="#fff" stroke-width="1.500"/><path d="M5,3.800L10.800,6.600L5,9.400z" fill="#fff"/></svg></div>
<div style="left:399px;top:625.600px;width:20.9px;height:15.700px;border-radius:3px;background:#4a4a4a"><svg style="left:3px;top:0.500px" width="15" height="15" viewBox="0 0 15 15"><ellipse cx="6" cy="2.600" rx="4.600" ry="1.900" fill="none" stroke="#fff" stroke-width="1.200"/><path d="M1.400,2.600V11.500M10.600,2.600V6" stroke="#fff" stroke-width="1.200"/><path d="M1.400,5.600Q6,8 10.600,5.600M1.400,8.600Q4,10 6,9.800" fill="none" stroke="#fff" stroke-width="1.100"/><rect x="4.600" y="7.400" width="9.800" height="7" fill="#fff"/><path d="M5.600,13.400L8.400,10.200L10,12L11.600,10.600L13.400,13.400z" fill="#4a4a4a"/><path d="M0.800,11.500Q2.500,13.400 5,13.400" fill="none" stroke="#fff" stroke-width="1.200"/></svg></div>
<div style="left:423.6px;top:625.600px;width:20.6px;height:15.700px;border-radius:3px;background:#4a4a4a"><svg style="left:3.500px;top:1.500px" width="14" height="13" viewBox="0 0 14 13"><rect x="0.600" y="0.600" width="10" height="9" fill="none" stroke="#7c7c7c" stroke-width="1"/><rect x="2.600" y="2.600" width="10.500" height="9.600" fill="#808080"/></svg></div>
<div style="left:448.8px;top:625.600px;width:18.6px;height:15.700px;border-radius:3px;background:#4a4a4a"><svg style="left:2.300px;top:0.800px" width="14" height="14" viewBox="0 0 14 14"><path d="M12,4A6,6 0 1 0 12.800,8.500" fill="none" stroke="#777" stroke-width="1.400"/><path d="M10,4.600L13.200,1.400V4.600z" fill="#777"/><path d="M4.600,4.800L7,7L4.600,9.200zM9.400,4.800L7,7L9.400,9.200z" fill="#777"/></svg></div>
<div style="left:647.500px;top:633.600px;width:6.600px;height:1.700px;background:#e8e8e8"></div>
<div style="left:660.800px;top:632.700px;width:65.500px;height:3.300px;border-radius:1.600px;background:#454545"></div>
<div style="left:660.800px;top:632.700px;width:22px;height:3.300px;border-radius:1.600px;background:#2f6fe8"></div>
<div style="left:677px;top:627.500px;width:13.600px;height:13.600px;border-radius:50%;background:#a6a6a6"></div>
<div style="left:732.700px;top:633.500px;width:7.600px;height:1.900px;background:#f0f0f0"></div><div style="left:735.600px;top:630.600px;width:1.900px;height:7.600px;background:#f0f0f0"></div>
<div style="left:749.600px;top:625px;width:49.500px;height:15px;border-radius:3px;background:#4a4a4a"><svg style="left:6px;top:2.500px" width="14" height="10" viewBox="0 0 14 10"><path d="M0,1h13.200M0,3.700h13.200M0,6.400h13.200M0,9.100h13.200" stroke="#e4e4e4" stroke-width="1.100"/></svg><svg style="left:30.500px;top:2.500px" width="15" height="10" viewBox="0 0 15 10"><circle cx="2.2" cy="2.4" r="1.600" fill="none" stroke="#e4e4e4" stroke-width="1"/><circle cx="7.1000000000000005" cy="2.4" r="1.600" fill="none" stroke="#e4e4e4" stroke-width="1"/><circle cx="12.0" cy="2.4" r="1.600" fill="none" stroke="#e4e4e4" stroke-width="1"/><circle cx="2.2" cy="7.4" r="1.600" fill="none" stroke="#e4e4e4" stroke-width="1"/><circle cx="7.1000000000000005" cy="7.4" r="1.600" fill="none" stroke="#e4e4e4" stroke-width="1"/><circle cx="12.0" cy="7.4" r="1.600" fill="none" stroke="#e4e4e4" stroke-width="1"/></svg></div>
<div style="left:16px;top:645.500px;width:1009px;height:22.500px;background:#2d2d2d"></div>
<div style="left:286.300px;top:645.200px;width:516.400px;height:.8px;background:#343434"></div>
<span style="left:319px;top:650.500px;width:400px;text-align:center;font-size:11px;line-height:16px;white-space:nowrap;-webkit-text-stroke:.3px #fff">打勾.psd, 2.5 MB, 2000 × 2000</span>
<div style="left:802.700px;top:73px;width:9.300px;height:572.500px;background:#2f2f2f"></div>
<div style="left:812px;top:73px;width:213px;height:572.500px;background:#262626;overflow:hidden">
<div style="left:0;top:0;width:213px;height:21px;background:#292929"></div>
<div style="left:63.7px;top:3.7px;width:77.300px;height:13.600px;border-radius:3px;background:#555;overflow:hidden"><div style="left:0;top:0;width:38.800px;height:14px;background:#1b1b1b"></div><span class="bt" style="left:8.500px;top:0;line-height:13.600px;font-size:10.200px">整理</span><span class="bt" style="left:47.500px;top:0;line-height:13.600px;font-size:10.200px">属性</span></div>
<div style="left:0px;top:21px;width:212.500px;height:58.300px;background:#252525;border:1.200px solid #0d0d0d"></div>
<div style="left:16.9px;top:30.2px;width:14.500px;height:14.800px;border-radius:2px;background:#6e6e6e;box-shadow:inset 0 0 0 .6px #8a8a8a"><svg style="left:0;top:0" width="14.500" height="14.800" viewBox="0 0 14.500 14.800"><path d="M2.600,7.800L5.800,11L11.800,3.800" fill="none" stroke="#e8e8e8" stroke-width="2.200"/></svg></div>
<div style="left:48.3px;top:31.4px;width:12.300px;height:12.300px;border-radius:1.500px;background:#5e5e5e"><span style="left:0;top:0;width:12.300px;text-align:center;font-size:10.500px;line-height:12.600px;color:#333">1</span></div>
<div style="left:64.2px;top:31.4px;width:12.300px;height:12.300px;border-radius:1.500px;background:#5e5e5e"><span style="left:0;top:0;width:12.300px;text-align:center;font-size:10.500px;line-height:12.600px;color:#333">2</span></div>
<div style="left:80.1px;top:31.4px;width:12.300px;height:12.300px;border-radius:1.500px;background:#5e5e5e"><span style="left:0;top:0;width:12.300px;text-align:center;font-size:10.500px;line-height:12.600px;color:#333">3</span></div>
<div style="left:96.0px;top:31.4px;width:12.300px;height:12.300px;border-radius:1.500px;background:#5e5e5e"><span style="left:0;top:0;width:12.300px;text-align:center;font-size:10.500px;line-height:12.600px;color:#333">4</span></div>
<div style="left:111.9px;top:31.4px;width:12.300px;height:12.300px;border-radius:1.500px;background:#5e5e5e"><span style="left:0;top:0;width:12.300px;text-align:center;font-size:10.500px;line-height:12.600px;color:#333">5</span></div>
<div style="left:126.6px;top:30.8px;width:12.800px;height:13px;border-radius:1.500px;background:#fff"><svg style="left:0;top:0" width="12.800" height="13" viewBox="0 0 12.800 13"><path d="M3.600,3.700L9.200,9.300M9.200,3.700L3.600,9.300" stroke="#000" stroke-width="1.500"/></svg></div>
<div style="left:17.2px;top:56.7px;width:14.200px;height:13.800px;border-radius:1.500px;background:#5e2a24;box-shadow:inset 0 0 0 .6px rgba(255,255,255,.12)"></div>
<div style="left:32.8px;top:56.7px;width:14.200px;height:13.800px;border-radius:1.500px;background:#5e442a;box-shadow:inset 0 0 0 .6px rgba(255,255,255,.12)"></div>
<div style="left:48.4px;top:56.7px;width:14.200px;height:13.800px;border-radius:1.500px;background:#5a5a2c;box-shadow:inset 0 0 0 .6px rgba(255,255,255,.12)"></div>
<div style="left:64.1px;top:56.7px;width:14.200px;height:13.800px;border-radius:1.500px;background:#2c5a2c;box-shadow:inset 0 0 0 .6px rgba(255,255,255,.12)"></div>
<div style="left:79.7px;top:56.7px;width:14.200px;height:13.800px;border-radius:1.500px;background:#23306a;box-shadow:inset 0 0 0 .6px rgba(255,255,255,.12)"></div>
<div style="left:95.3px;top:56.7px;width:14.200px;height:13.800px;border-radius:1.500px;background:#4a2a56;box-shadow:inset 0 0 0 .6px rgba(255,255,255,.12)"></div>
<div style="left:110.9px;top:56.7px;width:14.200px;height:13.800px;border-radius:1.500px;background:#444444;box-shadow:inset 0 0 0 .6px rgba(255,255,255,.12)"></div>
<div style="left:126.5px;top:56.4px;width:13.600px;height:14.300px;border-radius:1.500px;background:#f4f4f4"><svg style="left:0;top:0" width="13.600" height="14.300" viewBox="0 0 13.600 14.300"><path d="M1.600,12.700L12,1.600" stroke="#e8453c" stroke-width="1.300"/></svg></div>
<div class="row hdr" style="left:0;top:80.8px;width:213px;height:19.200px"><svg style="left:0;top:0" width="20" height="19.200" viewBox="0 0 20 19.200"><path d="M3.5999999999999996,8.200000000000001 L6.8,11.4 L10.0,8.200000000000001" fill="none" stroke="#c2c2c2" stroke-width="1.35" stroke-linecap="round" stroke-linejoin="round"/></svg><span class="t" style="left:18px;top:.3px;line-height:19.200px">类别组</span><svg style="left:193.500px;top:2.600px" width="14" height="14" viewBox="0 0 14 14"><circle cx="7" cy="7" r="6.200" fill="none" stroke="#e8e8e8" stroke-width="1"/><circle cx="4" cy="7" r=".9" fill="#e8e8e8"/><circle cx="7" cy="7" r=".9" fill="#e8e8e8"/><circle cx="10" cy="7" r=".9" fill="#e8e8e8"/></svg></div>
<div class="row hdr" style="left:0;top:112.0px;width:213px;height:19.200px"><svg style="left:0;top:0" width="20" height="19.200" viewBox="0 0 20 19.200"><path d="M3.5999999999999996,8.200000000000001 L6.8,11.4 L10.0,8.200000000000001" fill="none" stroke="#c2c2c2" stroke-width="1.35" stroke-linecap="round" stroke-linejoin="round"/></svg><span class="t" style="left:18px;top:.3px;line-height:19.200px">类别</span><div style="left:180.800px;top:9px;width:7.400px;height:1.800px;background:#fff"></div><div style="left:183.600px;top:6.200px;width:1.800px;height:7.400px;background:#fff"></div><div style="left:197px;top:9.200px;width:7px;height:1.300px;background:#777"></div></div>
<div style="left:24.2px;top:138.7px;width:169.300px;height:15.600px;border-radius:7.800px;background:#1d1d1d"><svg style="left:4px;top:1.500px" width="20" height="14" viewBox="0 0 20 14"><circle cx="5.600" cy="5.400" r="2.900" fill="none" stroke="#fff" stroke-width="1.600"/><path d="M7.800,7.600L11.400,11.400" stroke="#fff" stroke-width="1.900" stroke-linecap="round"/><path d="M12.600,5.600h3.400l-1.700,2z" fill="#fff"/></svg><span style="left:25.500px;top:0;line-height:15.600px;font-size:10.800px;color:#868686;-webkit-text-stroke:.25px #868686;white-space:nowrap">Filter Categories</span></div>
<div class="tag" style="left:2.5px;top:165.9px;width:7.600px;height:9.600px;background:#939393"></div>
<svg style="left:19px;top:164.2px" width="10" height="14" viewBox="0 0 10 14"><path d="M3.8000000000000003,3.6 L7.0,7 L3.8000000000000003,10.4" fill="none" stroke="#c2c2c2" stroke-width="1.35" stroke-linecap="round" stroke-linejoin="round"/></svg>
<div style="left:35.7px;top:164.4px;width:13.800px;height:13.600px;border-radius:2px;background:#767676"></div>
<span class="t" style="left:62px;top:162.4px">人物</span>
<div class="tag" style="left:2.5px;top:184.9px;width:7.600px;height:9.600px;background:#939393"></div>
<div style="left:35.7px;top:183.4px;width:13.800px;height:13.600px;border-radius:2px;background:#767676"></div>
<span class="t" style="left:62px;top:181.4px">其它</span>
<div class="tag" style="left:2.5px;top:204.0px;width:7.600px;height:9.600px;background:#939393"></div>
<div style="left:35.7px;top:202.5px;width:13.800px;height:13.600px;border-radius:2px;background:#767676"></div>
<span class="t" style="left:62px;top:200.5px">地点</span>
<div class="tag" style="left:2.5px;top:223.0px;width:7.600px;height:9.600px;background:#939393"></div>
<div style="left:35.7px;top:221.5px;width:13.800px;height:13.600px;border-radius:2px;background:#767676"></div>
<span class="t" style="left:62px;top:219.5px">相册</span>
<div class="row hdr" style="left:0;top:238.3px;width:213px;height:19.200px"><svg style="left:0;top:0" width="20" height="19.200" viewBox="0 0 20 19.200"><path d="M3.5999999999999996,8.200000000000001 L6.8,11.4 L10.0,8.200000000000001" fill="none" stroke="#c2c2c2" stroke-width="1.35" stroke-linecap="round" stroke-linejoin="round"/></svg><span class="t" style="left:18px;top:.3px;line-height:19.200px">People</span><svg style="left:193.500px;top:2.600px" width="14" height="14" viewBox="0 0 14 14"><circle cx="7" cy="7" r="6.200" fill="none" stroke="#e8e8e8" stroke-width="1"/><circle cx="4" cy="7" r=".9" fill="#e8e8e8"/><circle cx="7" cy="7" r=".9" fill="#e8e8e8"/><circle cx="10" cy="7" r=".9" fill="#e8e8e8"/></svg></div>
<div class="row hdr" style="left:0;top:257.4px;width:213px;height:19.200px"><svg style="left:0;top:0" width="20" height="19.200" viewBox="0 0 20 19.200"><path d="M3.5999999999999996,8.200000000000001 L6.8,11.4 L10.0,8.200000000000001" fill="none" stroke="#c2c2c2" stroke-width="1.35" stroke-linecap="round" stroke-linejoin="round"/></svg><span class="t" style="left:18px;top:.3px;line-height:19.200px">评级</span></div>
<div class="tag" style="left:2.5px;top:280.0px;width:7.600px;height:9.600px;background:#939393"></div>
<div style="left:35.3px;top:278.8px;width:13px;height:13px;border-radius:2px;background:#fff"><span style="left:0;top:0;width:13px;text-align:center;font-size:10.500px;line-height:13.400px;color:#000">1</span></div>
<span class="t" style="left:62px;top:276.5px">一</span>
<div class="tag" style="left:2.5px;top:299.0px;width:7.600px;height:9.600px;background:#939393"></div>
<div style="left:35.3px;top:297.8px;width:13px;height:13px;border-radius:2px;background:#fff"><span style="left:0;top:0;width:13px;text-align:center;font-size:10.500px;line-height:13.400px;color:#000">2</span></div>
<span class="t" style="left:62px;top:295.5px">二</span>
<div class="tag" style="left:2.5px;top:318.1px;width:7.600px;height:9.600px;background:#939393"></div>
<div style="left:35.3px;top:316.9px;width:13px;height:13px;border-radius:2px;background:#fff"><span style="left:0;top:0;width:13px;text-align:center;font-size:10.500px;line-height:13.400px;color:#000">3</span></div>
<span class="t" style="left:62px;top:314.6px">三</span>
<div class="tag" style="left:2.5px;top:337.1px;width:7.600px;height:9.600px;background:#939393"></div>
<div style="left:35.3px;top:335.9px;width:13px;height:13px;border-radius:2px;background:#fff"><span style="left:0;top:0;width:13px;text-align:center;font-size:10.500px;line-height:13.400px;color:#000">4</span></div>
<span class="t" style="left:62px;top:333.6px">四</span>
<div class="tag" style="left:2.5px;top:356.1px;width:7.600px;height:9.600px;background:#939393"></div>
<div style="left:35.3px;top:354.9px;width:13px;height:13px;border-radius:2px;background:#fff"><span style="left:0;top:0;width:13px;text-align:center;font-size:10.500px;line-height:13.400px;color:#000">5</span></div>
<span class="t" style="left:62px;top:352.6px">五</span>
<div class="tag" style="left:2.5px;top:375.2px;width:7.600px;height:9.600px;background:#939393"></div>
<div style="left:35.3px;top:374.0px;width:13px;height:13px;border-radius:2px;background:#fff"><svg style="left:0;top:0" width="13" height="13" viewBox="0 0 13 13"><path d="M3.600,3.600L9.400,9.400M9.400,3.600L3.600,9.400" stroke="#000" stroke-width="1.500"/></svg></div>
<span class="t" style="left:62px;top:371.7px">未评级</span>
<div class="row hdr" style="left:0;top:390.2px;width:213px;height:19.200px"><svg style="left:0;top:0" width="20" height="19.200" viewBox="0 0 20 19.200"><path d="M3.5999999999999996,8.200000000000001 L6.8,11.4 L10.0,8.200000000000001" fill="none" stroke="#c2c2c2" stroke-width="1.35" stroke-linecap="round" stroke-linejoin="round"/></svg><span class="t" style="left:18px;top:.3px;line-height:19.200px">标签: 默认值</span><svg style="left:193.500px;top:2.600px" width="14" height="14" viewBox="0 0 14 14"><circle cx="7" cy="7" r="6.200" fill="none" stroke="#e8e8e8" stroke-width="1"/><circle cx="4" cy="7" r=".9" fill="#e8e8e8"/><circle cx="7" cy="7" r=".9" fill="#e8e8e8"/><circle cx="10" cy="7" r=".9" fill="#e8e8e8"/></svg></div>
<div class="tag" style="left:2.5px;top:413.2px;width:7.600px;height:9.600px;background:#939393"></div>
<div style="left:34.6px;top:411.3px;width:14.400px;height:14.400px;background:#d33b28"></div>
<span class="t" style="left:62px;top:409.7px">红</span>
<div class="tag" style="left:2.5px;top:432.2px;width:7.600px;height:9.600px;background:#939393"></div>
<div style="left:34.6px;top:430.3px;width:14.400px;height:14.400px;background:#dd8a35"></div>
<span class="t" style="left:62px;top:428.7px">橙</span>
<div class="tag" style="left:2.5px;top:451.3px;width:7.600px;height:9.600px;background:#939393"></div>
<div style="left:34.6px;top:449.4px;width:14.400px;height:14.400px;background:#d8cd4d"></div>
<span class="t" style="left:62px;top:447.8px">黄</span>
<div class="tag" style="left:2.5px;top:470.3px;width:7.600px;height:9.600px;background:#939393"></div>
<div style="left:34.6px;top:468.4px;width:14.400px;height:14.400px;background:#50c440"></div>
<span class="t" style="left:62px;top:466.8px">绿</span>
<div class="tag" style="left:2.5px;top:489.3px;width:7.600px;height:9.600px;background:#939393"></div>
<div style="left:34.6px;top:487.4px;width:14.400px;height:14.400px;background:#1a40e0"></div>
<span class="t" style="left:62px;top:485.8px">蓝</span>
<div class="tag" style="left:2.5px;top:508.4px;width:7.600px;height:9.600px;background:#939393"></div>
<div style="left:34.6px;top:506.4px;width:14.400px;height:14.400px;background:#7b2e8a"></div>
<span class="t" style="left:62px;top:504.9px">紫</span>
<div class="tag" style="left:2.5px;top:527.4px;width:7.600px;height:9.600px;background:#939393"></div>
<div style="left:34.6px;top:525.5px;width:14.400px;height:14.400px;background:#999999"></div>
<span class="t" style="left:62px;top:523.9px">灰</span>
<div class="tag" style="left:2.5px;top:546.4px;width:7.600px;height:9.600px;background:#939393"></div>
<div style="left:34.6px;top:544.5px;width:14.400px;height:14.400px;background:#f4f4f4"><svg style="left:0;top:0" width="14.400" height="14.400" viewBox="0 0 14.400 14.400"><path d="M1,13.400L13.400,1" stroke="#e8453c" stroke-width="1.300"/></svg></div>
<span class="t" style="left:62px;top:542.9px">未指定标签</span>
<div class="row hdr" style="left:0;top:561.6px;width:213px;height:19.200px"><svg style="left:0;top:0" width="20" height="19.200" viewBox="0 0 20 19.200"><path d="M3.5999999999999996,8.200000000000001 L6.8,11.4 L10.0,8.200000000000001" fill="none" stroke="#c2c2c2" stroke-width="1.35" stroke-linecap="round" stroke-linejoin="round"/></svg><span class="t" style="left:18px;top:.3px;line-height:19.200px">关键词组: 风景</span><svg style="left:193.500px;top:2.600px" width="14" height="14" viewBox="0 0 14 14"><circle cx="7" cy="7" r="6.200" fill="none" stroke="#e8e8e8" stroke-width="1"/><circle cx="4" cy="7" r=".9" fill="#e8e8e8"/><circle cx="7" cy="7" r=".9" fill="#e8e8e8"/><circle cx="10" cy="7" r=".9" fill="#e8e8e8"/></svg></div>
</div>
</div></div>
</body></html>
